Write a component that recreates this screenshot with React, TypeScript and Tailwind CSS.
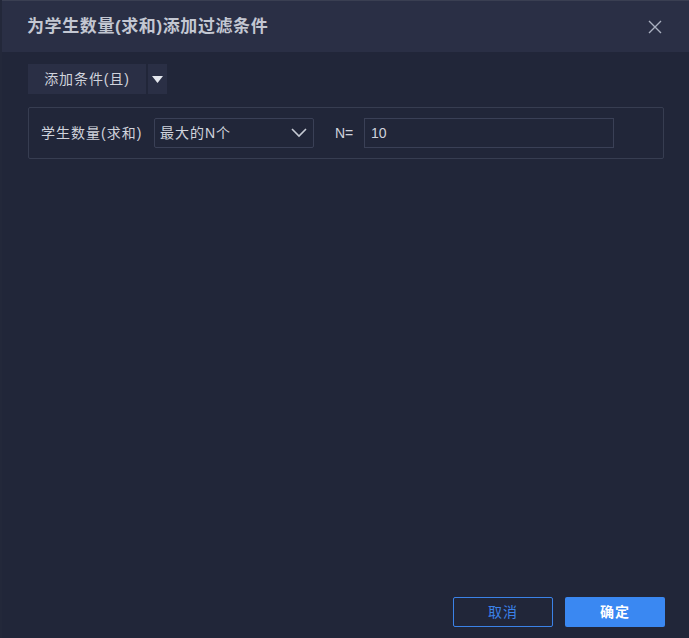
import React from "react";

export default function App() {
  return (
    <div
      className="w-[689px] h-[638px] bg-[#1b1f2e] flex overflow-hidden"
      style={{ fontFamily: '"Liberation Sans", "Noto Sans CJK SC", sans-serif' }}
    >
      <div className="w-[2px] shrink-0 bg-[#23283a]" />
      <div className="flex-1 flex flex-col bg-[#212639] border-t border-[#3a3f52]">
        <div className="h-[51px] shrink-0 bg-[#2a2f45] flex items-center justify-between pl-[25px] pr-[27px]">
          <span className="text-[17px] font-bold text-[#c3c7d2] leading-none tracking-[0.6px]">
            为学生数量(求和)添加过滤条件
          </span>
          <svg width="14" height="14" viewBox="0 0 14 14">
            <path d="M1 1L13 13M13 1L1 13" stroke="#aab0c0" strokeWidth="1.4" />
          </svg>
        </div>
        <div className="flex-1 flex flex-col pl-[26px] pr-[25px] pt-[12px] pb-[11px]">
          <div className="flex gap-[2px]">
            <div className="h-[30px] w-[118px] bg-[#2a2f45] flex items-center justify-center text-[14px] text-[#d0d3dc] tracking-[0.9px]">
              添加条件(且)
            </div>
            <div className="h-[30px] w-[19px] bg-[#2a2f45] flex items-center justify-center">
              <svg width="11" height="7" viewBox="0 0 11 7">
                <path d="M0 0H11L5.5 7Z" fill="#e4e7ee" />
              </svg>
            </div>
          </div>
          <div className="mt-[13px] h-[52px] w-[636px] border border-[#373d51] rounded-[2px] flex items-center pl-[12px]">
            <span className="text-[14px] text-[#d0d3dc] w-[113px] tracking-[1px]">学生数量(求和)</span>
            <div className="h-[30px] w-[160px] border border-[#3a4056] rounded-[2px] flex items-center justify-between pl-[5px] pr-[6px]">
              <span className="text-[14px] text-[#d0d3dc] tracking-[1px]">最大的N个</span>
              <svg width="16" height="10" viewBox="0 0 16 10">
                <path d="M1 1L8 8L15 1" stroke="#c6cad4" strokeWidth="1.6" fill="none" />
              </svg>
            </div>
            <span className="ml-[21px] text-[14px] text-[#d0d3dc] w-[29px]">N=</span>
            <div className="h-[30px] w-[250px] border border-[#3a4056] flex items-center pl-[6px]">
              <span className="text-[14px] text-[#d0d3dc]">10</span>
            </div>
          </div>
          <div className="flex-1" />
          <div className="flex justify-end gap-[12px] mr-[-1px]">
            <button className="h-[30px] w-[100px] border border-[#3b82e8] rounded-[2px] text-[14px] text-[#3b82e8] bg-transparent tracking-[1px]">
              取消
            </button>
            <button className="h-[30px] w-[100px] rounded-[2px] text-[14px] text-white bg-[#3a88f2] font-bold tracking-[1px]">
              确定
            </button>
          </div>
        </div>
      </div>
    </div>
  );
}
